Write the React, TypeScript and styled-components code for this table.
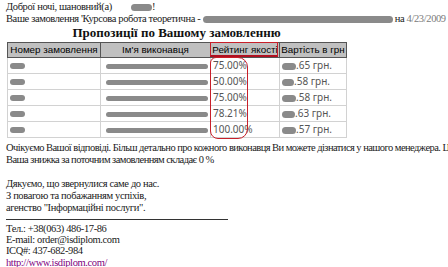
import React from 'react';
import styled, { createGlobalStyle } from 'styled-components';

const GlobalStyle = createGlobalStyle`
  html, body {
    margin: 0;
    padding: 0;
    background: #ffffff;
  }
  body {
    width: 448px;
    height: 267px;
    overflow: hidden;
  }
`;

const Page = styled.div`
  padding: 1px 0 0 6px;
  font-family: 'Liberation Serif', 'Times New Roman', serif;
  font-size: 10.5px;
  letter-spacing: -0.38px;
  line-height: 12px;
  color: #1a1a1a;
  white-space: nowrap;
`;

const Line = styled.div`
  height: 12px;
`;

const Message = styled.div`
  letter-spacing: -0.55px;
`;

const FooterLine = styled.div`
  height: 11.2px;
  line-height: 11px;
`;

const Blank = styled.div<{ $h?: number }>`
  height: ${(p) => p.$h ?? 12}px;
`;

const Blur = styled.span<{ $w: number; $h?: number; $gap?: number }>`
  display: inline-block;
  width: ${(p) => p.$w}px;
  height: ${(p) => p.$h ?? 7}px;
  margin-left: ${(p) => p.$gap ?? 0}px;
  border-radius: 4px;
  background: #8a8a8a;
  filter: blur(0.6px);
  vertical-align: middle;
`;

const DateText = styled.span`
  color: #7a7a7a;
`;

const Offer = styled.div`
  position: relative;
  width: 339px;
  margin-left: 1px;
`;

const Title = styled.div`
  text-align: center;
  font-weight: bold;
  font-size: 13px;
  letter-spacing: 0;
  line-height: 15px;
  height: 17px;
  color: #111;
`;

const Table = styled.table`
  border-collapse: collapse;
  width: 339px;
  font-family: 'Noto Sans', 'DejaVu Sans', sans-serif;
  font-size: 10px;
  letter-spacing: 0;
  table-layout: fixed;
  border: 1px solid #9a9a9a;
`;

const Col = styled.col<{ $w: number }>`
  width: ${(p) => p.$w}px;
`;

const Head = styled.th`
  height: 14px;
  padding: 0;
  background: #c0c0c0;
  border: 1px solid #555;
  font-family: 'Liberation Sans', Arial, sans-serif;
  font-size: 9.8px;
  font-weight: normal;
  color: #000;
  line-height: 14px;
  text-align: center;
  white-space: nowrap;
  overflow: hidden;
`;

const Cell = styled.td<{ $align?: string }>`
  height: 15px;
  padding: 0 2px;
  border: 1px solid #d2d2d2;
  color: #555;
  line-height: 15px;
  text-align: ${(p) => p.$align ?? 'left'};
  overflow: hidden;
`;

const Mark = styled.div`
  position: absolute;
  pointer-events: none;
`;

const HeadMark = styled(Mark)`
  left: 203px;
  top: 17px;
  width: 66px;
  height: 12px;
  border: 1px solid #c8202a;
  border-bottom: 2px solid #b01020;
`;

const ColumnMark = styled(Mark)`
  left: 203px;
  top: 32px;
  width: 36px;
  height: 80px;
  border: 1px solid #c8202a;
  border-radius: 6px 10px 10px 8px;
`;

const Rule = styled.div`
  width: 222px;
  height: 1px;
  background: #333;
  margin: 5px 0 3px;
`;

const Link = styled.a`
  color: #800080;
  text-decoration: underline;
`;

const rows = [
  { rate: '75.00%', price: '.65 грн.', pw: 14 },
  { rate: '50.00%', price: '.58 грн.', pw: 12 },
  { rate: '75.00%', price: '.58 грн.', pw: 14 },
  { rate: '78.21%', price: '.63 грн.', pw: 13 },
  { rate: '100.00%', price: '.57 грн.', pw: 14 },
];

const App = () => {
  return (
    <Page>
      <GlobalStyle />
      <Line>
        Доброї ночі, шановний(а) <Blur $w={21} $gap={17} />!
      </Line>
      <Line>
        Ваше замовлення 'Курсова робота теоретична - <Blur $w={190} /> на{' '}
        <DateText>4/23/2009</DateText>
      </Line>
      <Offer>
        <Title>Пропозиції по Вашому замовленню</Title>
        <Table>
          <colgroup>
            <Col $w={93} />
            <Col $w={110} />
            <Col $w={69} />
            <Col $w={67} />
          </colgroup>
          <thead>
            <tr>
              <Head>Номер замовлення</Head>
              <Head>Ім'я виконавця</Head>
              <Head>Рейтинг якості</Head>
              <Head>Вартість в грн</Head>
            </tr>
          </thead>
          <tbody>
            {rows.map((r, i) => (
              <tr key={i}>
                <Cell>
                  <Blur $w={15} $h={6} />
                </Cell>
                <Cell $align="right">
                  <Blur $w={102} $h={5} />
                </Cell>
                <Cell>{r.rate}</Cell>
                <Cell>
                  <Blur $w={r.pw} $h={7} />
                  {r.price}
                </Cell>
              </tr>
            ))}
          </tbody>
        </Table>
        <HeadMark />
        <ColumnMark />
      </Offer>
      <Blank $h={4} />
      <Message>
        <Line>
          Очікуємо Вашої відповіді. Більш детально про кожного виконавця Ви можете дізнатися у нашого
          менеджера. Ця інформація безкоштовна.
        </Line>
        <Line>Ваша знижка за поточним замовленням складає 0 %</Line>
      </Message>
      <Blank />
      <Line>Дякуємо, що звернулися саме до нас.</Line>
      <Line>З повагою та побажанням успіхів,</Line>
      <Line>агенство "Інформаційні послуги".</Line>
      <Rule />
      <FooterLine>Тел.: +38(063) 486-17-86</FooterLine>
      <FooterLine>E-mail: order@isdiplom.com</FooterLine>
      <FooterLine>ICQ#: 437-682-984</FooterLine>
      <FooterLine>
        <Link href="#">http://www.isdiplom.com/</Link>
      </FooterLine>
    </Page>
  );
};

export default App;
